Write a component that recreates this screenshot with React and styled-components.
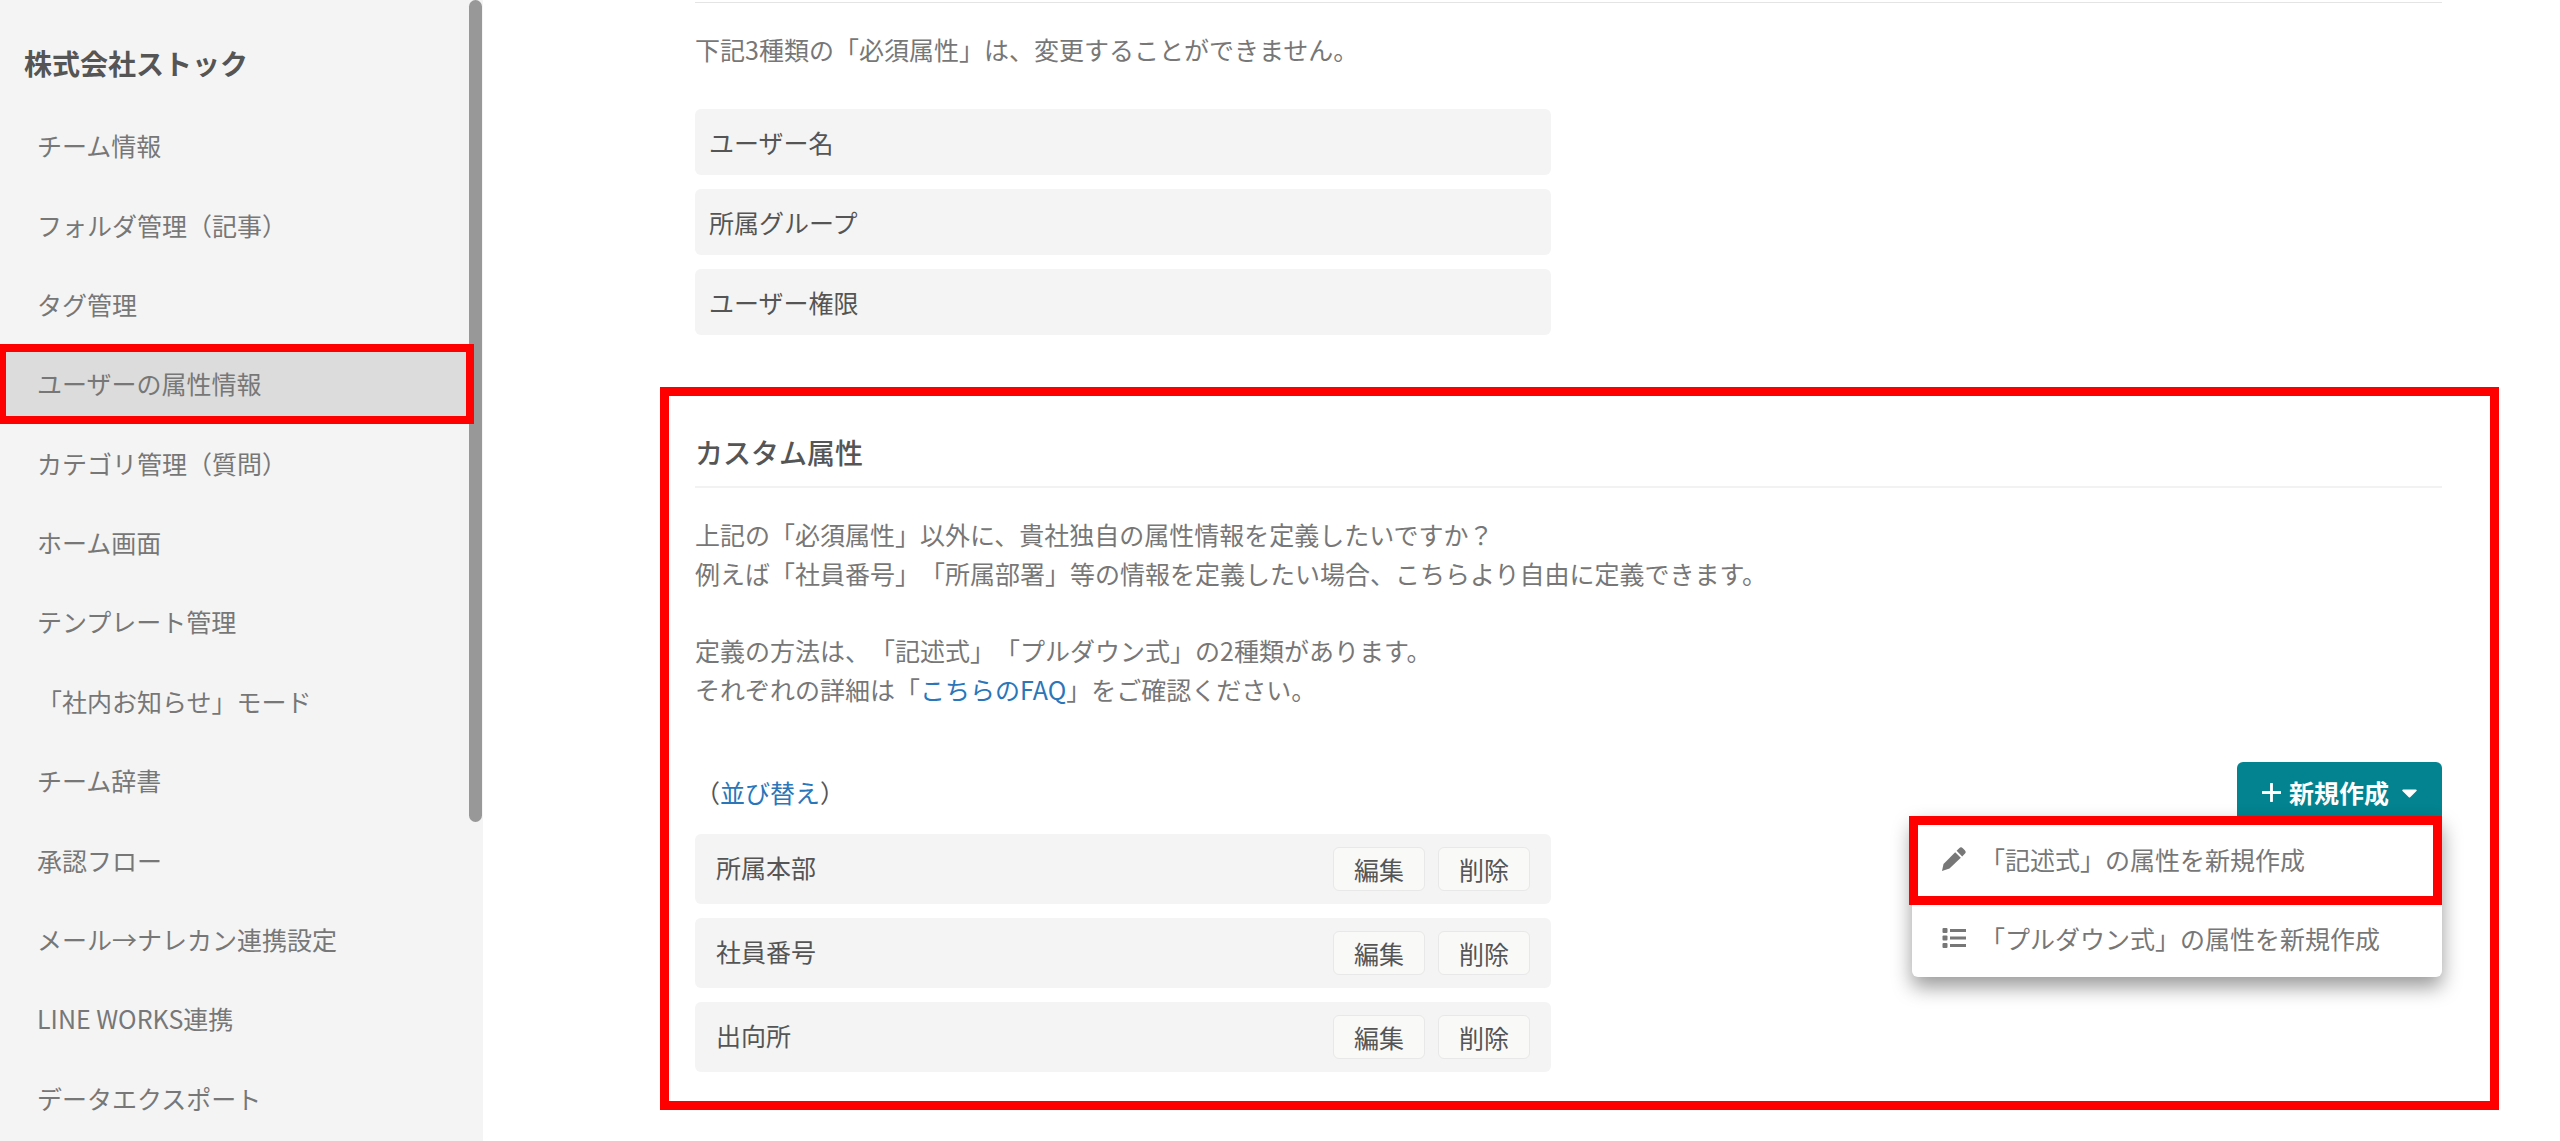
import React from "react"
import styled, { createGlobalStyle, css } from "styled-components"
import { FaCaretDown } from "react-icons/fa"

const GlobalStyle = createGlobalStyle`
  * {
    box-sizing: border-box;
  }
  body {
    margin: 0;
    background: #fff;
    color: #777;
    font-family: "Noto Sans CJK JP", "Noto Sans", sans-serif;
    font-size: 25px;
    line-height: 39px;
    text-spacing-trim: space-all;
  }
  button {
    font: inherit;
    cursor: pointer;
  }
  a {
    color: #2a76b9;
    text-decoration: none;
  }
`
const Page = styled.div`
  display: flex;
  min-height: 100vh;
`
const Sidebar = styled.aside`
  position: relative;
  display: flex;
  flex-direction: column;
  flex: 0 0 483px;
  padding-bottom: 3px;
  background: #f4f4f4;
`
const TeamName = styled.h1`
  margin: 0;
  padding: 43px 24px 23px;
  color: #555;
  font-size: 28px;
  font-weight: 700;
  line-height: 40px;
`
const Menu = styled.nav`
  display: grid;
  grid-auto-rows: 1fr;
  flex: 1;
  margin-right: 9px;
`
const MenuLink = styled.a`
  display: flex;
  align-items: center;
  padding: 0 37px;
  color: #777;
  ${props =>
    props.$active &&
    css`
      z-index: 1;
      padding: 0 31px;
      border: 8px solid #f00;
      border-left-width: 6px;
      background: #dcdcdc;
    `}
`
const ScrollThumb = styled.div`
  position: absolute;
  top: 0;
  right: 1px;
  width: 13px;
  height: 72%;
  border-radius: 7px;
  background: #989898;
`
const Main = styled.main`
  flex: 1;
  min-width: 0;
  padding: 2px 61px 31px 177px;
`
const Required = styled.section`
  margin: 0 57px 52px 35px;
  padding-top: 27px;
  border-top: 1px solid #e4e4e4;
`
const Text = styled.p`
  margin: 0 0 ${props => props.$space}px;
`
const List = styled.ul`
  display: flex;
  flex-direction: column;
  gap: 14px;
  width: 49%;
  margin: 0;
  padding: 0;
  list-style: none;
`
const RequiredRow = styled.li`
  display: flex;
  align-items: center;
  height: 66px;
  padding: 0 14px;
  border-radius: 6px;
  background: #f4f4f4;
  color: #555;
`
const CustomRow = styled(RequiredRow)`
  gap: 13px;
  height: 70px;
  padding: 0 21px;
`
const RowName = styled.span`
  flex: 1;
  padding-bottom: 4px;
`
const SmallButton = styled.button`
  height: 44px;
  padding: 0 20px;
  border: 1px solid #e8e8e8;
  border-radius: 6px;
  background: #f9f9f8;
  color: #555;
  line-height: 40px;
`
const Custom = styled.section`
  padding: 36px 48px 29px 26px;
  border: 9px solid #f00;
`
const Heading = styled.h2`
  margin: 0 0 27px;
  padding-bottom: 14px;
  border-bottom: 2px solid #f2f2f2;
  color: #555;
  font-size: 28px;
  font-weight: 500;
  line-height: 40px;
`
const Toolbar = styled.div`
  display: flex;
  justify-content: space-between;
  margin-bottom: 12px;
  color: #555;
  line-height: 60px;
`
const Dropdown = styled.div`
  position: relative;
`
const CreateButton = styled.button`
  display: flex;
  align-items: center;
  gap: 8px;
  height: 60px;
  padding: 0 20px 0 25px;
  border: 0;
  border-radius: 6px;
  background: #03838f;
  color: #fff;
  font-weight: 700;
`
const DropdownMenu = styled.div`
  position: absolute;
  top: 54px;
  right: 0;
  width: 530px;
  padding-bottom: 6px;
  border-radius: 6px;
  background: #fff;
  box-shadow: 0 10px 20px rgba(0, 0, 0, 0.4);
`
const DropdownItem = styled.button`
  display: flex;
  align-items: center;
  gap: 14px;
  width: 100%;
  height: 66px;
  padding: 0 30px;
  border: 0;
  background: none;
  color: #777;
  ${props =>
    props.$marked &&
    css`
      width: auto;
      min-width: calc(100% + 3px);
      height: 89px;
      margin-left: -3px;
      padding: 0 24px 3px;
      border: 9px solid #f00;
    `}
`

const PlusIcon = () => (
  <svg width="19" height="19" viewBox="0 0 20 20" aria-hidden="true">
    <path
      d="M10 1v18M1 10h18"
      stroke="currentColor"
      strokeWidth="3"
      strokeLinecap="round"
    />
  </svg>
)
const PencilIcon = () => (
  <svg width="24" height="24" viewBox="0 0 24 24" fill="currentColor" aria-hidden="true">
    <path d="M13.2 5.2l5.6 5.6L7.5 21.5L0 24L1.5 17z" />
    <path d="M14.6 3.8l2.6-2.6q1.8-1.8 3.6 0l2 2q1.8 1.8 0 3.6l-2.6 2.6z" />
  </svg>
)
const ListIcon = () => (
  <svg width="24" height="24" viewBox="0 0 24 24" fill="currentColor" aria-hidden="true">
    <rect x="0.5" y="2" width="5" height="5" rx="1" />
    <rect x="0.5" y="9.5" width="5" height="5" rx="1" />
    <rect x="0.5" y="17" width="5" height="5" rx="1" />
    <path d="M8 3h16v3H8zM8 10.5h16v3H8zM8 18h16v3H8z" />
  </svg>
)

const menu = [
  "チーム情報",
  "フォルダ管理（記事）",
  "タグ管理",
  "ユーザーの属性情報",
  "カテゴリ管理（質問）",
  "ホーム画面",
  "テンプレート管理",
  "「社内お知らせ」モード",
  "チーム辞書",
  "承認フロー",
  "メール→ナレカン連携設定",
  "LINE WORKS連携",
  "データエクスポート",
]
const required = ["ユーザー名", "所属グループ", "ユーザー権限"]
const custom = ["所属本部", "社員番号", "出向所"]

export default () => (
  <Page>
    <GlobalStyle />
    <Sidebar>
      <TeamName>株式会社ストック</TeamName>
      <Menu>
        {menu.map(name => (
          <MenuLink href="#" key={name} $active={name === "ユーザーの属性情報"}>
            {name}
          </MenuLink>
        ))}
      </Menu>
      <ScrollThumb />
    </Sidebar>
    <Main>
      <Required>
        <Text $space={40}>
          下記3種類の「必須属性」は、変更することができません。
        </Text>
        <List>
          {required.map(name => (
            <RequiredRow key={name}>{name}</RequiredRow>
          ))}
        </List>
      </Required>
      <Custom>
        <Heading>カスタム属性</Heading>
        <Text $space={38}>
          上記の「必須属性」以外に、貴社独自の属性情報を定義したいですか？
          <br />
          例えば「社員番号」「所属部署」等の情報を定義したい場合、こちらより自由に定義できます。
        </Text>
        <Text $space={53}>
          定義の方法は、「記述式」「プルダウン式」の2種類があります。
          <br />
          それぞれの詳細は「<a href="#">こちらのFAQ</a>」をご確認ください。
        </Text>
        <Toolbar>
          <div>
            （<a href="#">並び替え</a>）
          </div>
          <Dropdown>
            <CreateButton>
              <PlusIcon />
              新規作成
              <FaCaretDown />
            </CreateButton>
            <DropdownMenu>
              <DropdownItem $marked>
                <PencilIcon />
                「記述式」の属性を新規作成
              </DropdownItem>
              <DropdownItem>
                <ListIcon />
                「プルダウン式」の属性を新規作成
              </DropdownItem>
            </DropdownMenu>
          </Dropdown>
        </Toolbar>
        <List>
          {custom.map(name => (
            <CustomRow key={name}>
              <RowName>{name}</RowName>
              <SmallButton>編集</SmallButton>
              <SmallButton>削除</SmallButton>
            </CustomRow>
          ))}
        </List>
      </Custom>
    </Main>
  </Page>
)
